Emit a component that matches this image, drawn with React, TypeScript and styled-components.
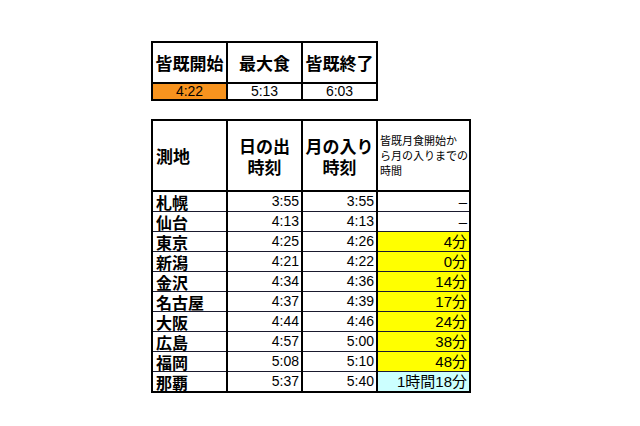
import { FC } from "react";
import styled, { createGlobalStyle } from "styled-components";

const GlobalStyle = createGlobalStyle`
  html, body {
    margin: 0;
    padding: 0;
    background: #ffffff;
  }
  body {
    font-family: "Liberation Sans", "Noto Sans CJK JP", sans-serif;
    color: #000;
  }
`;

const Page = styled.div`
  width: 640px;
  height: 426px;
  box-sizing: border-box;
  padding: 41px 0 0 151px;
  display: flex;
  flex-direction: column;
  align-items: flex-start;
  gap: 18px;
`;

const Table = styled.table`
  border-collapse: collapse;
  table-layout: fixed;
  border: 2px solid #000;
`;

const HeadCell = styled.th<{ $w: number }>`
  width: ${(p) => p.$w}px;
  height: 69px;
  border: 2px solid #000;
  padding: 0;
  font-family: "Noto Sans CJK JP", sans-serif;
  font-size: 17px;
  font-weight: 700;
  line-height: 21px;
  text-align: center;
  vertical-align: middle;
`;

const SmallHead = styled(HeadCell)`
  padding-left: 2px;
  font-size: 11px;
  font-weight: 400;
  line-height: 15px;
  text-align: left;
  white-space: nowrap;
  overflow: hidden;
`;

const PlaceHead = styled(HeadCell)`
  padding-left: 3px;
  text-align: left;
`;

const TopHead = styled.th<{ $w: number }>`
  width: ${(p) => p.$w}px;
  height: 39px;
  border: 2px solid #000;
  padding: 0;
  font-family: "Noto Sans CJK JP", sans-serif;
  font-size: 17px;
  font-weight: 700;
  text-align: center;
  vertical-align: middle;
`;

const ValueCell = styled.td<{ $bg?: string }>`
  height: 15px;
  padding: 0;
  border-left: 2px solid #000;
  border-right: 2px solid #000;
  background: ${(p) => p.$bg || "#fff"};
  font-size: 14px;
  line-height: 15px;
  text-align: center;
`;

const Row = styled.tr`
  & + & td {
    border-top: 1px solid #1a1a2e;
  }
`;

const Place = styled.td`
  height: 19px;
  padding: 0 0 0 3px;
  border-left: 2px solid #000;
  border-right: 2px solid #000;
  font-family: "Noto Sans CJK JP", sans-serif;
  font-size: 16px;
  font-weight: 700;
  line-height: 16px;
  text-align: left;
  vertical-align: middle;
  white-space: nowrap;
`;

const Time = styled.td<{ $bg?: string }>`
  height: 19px;
  padding: 0 2px 0 0;
  border-left: 2px solid #000;
  border-right: 2px solid #000;
  background: ${(p) => p.$bg || "#fff"};
  font-family: "Liberation Sans", "Noto Sans CJK JP", sans-serif;
  font-size: 14px;
  line-height: 19px;
  text-align: right;
  white-space: nowrap;
`;

const Span = styled(Time)`
  font-size: 15px;
`;

type Entry = {
  place: string;
  rise: string;
  set: string;
  span: string;
  bg?: string;
};

const YELLOW = "#ffff00";
const CYAN = "#ccffff";

const entries: Entry[] = [
  { place: "札幌", rise: "3:55", set: "3:55", span: "–" },
  { place: "仙台", rise: "4:13", set: "4:13", span: "–" },
  { place: "東京", rise: "4:25", set: "4:26", span: "4分", bg: YELLOW },
  { place: "新潟", rise: "4:21", set: "4:22", span: "0分", bg: YELLOW },
  { place: "金沢", rise: "4:34", set: "4:36", span: "14分", bg: YELLOW },
  { place: "名古屋", rise: "4:37", set: "4:39", span: "17分", bg: YELLOW },
  { place: "大阪", rise: "4:44", set: "4:46", span: "24分", bg: YELLOW },
  { place: "広島", rise: "4:57", set: "5:00", span: "38分", bg: YELLOW },
  { place: "福岡", rise: "5:08", set: "5:10", span: "48分", bg: YELLOW },
  { place: "那覇", rise: "5:37", set: "5:40", span: "1時間18分", bg: CYAN },
];

const EclipseTimes: FC = () => (
  <Table>
    <thead>
      <tr>
        <TopHead $w={73}>皆既開始</TopHead>
        <TopHead $w={73}>最大食</TopHead>
        <TopHead $w={73}>皆既終了</TopHead>
      </tr>
    </thead>
    <tbody>
      <tr>
        <ValueCell $bg="#f7931e">4:22</ValueCell>
        <ValueCell>5:13</ValueCell>
        <ValueCell>6:03</ValueCell>
      </tr>
    </tbody>
  </Table>
);

const CityTable: FC = () => (
  <Table>
    <thead>
      <tr>
        <PlaceHead $w={70}>測地</PlaceHead>
        <HeadCell $w={73}>
          日の出
          <br />
          時刻
        </HeadCell>
        <HeadCell $w={73}>
          月の入り
          <br />
          時刻
        </HeadCell>
        <SmallHead $w={89}>
          皆既月食開始か
          <br />
          ら月の入りまでの
          <br />
          時間
        </SmallHead>
      </tr>
    </thead>
    <tbody>
      {entries.map((e) => (
        <Row key={e.place}>
          <Place>{e.place}</Place>
          <Time>{e.rise}</Time>
          <Time>{e.set}</Time>
          <Span $bg={e.bg}>{e.span}</Span>
        </Row>
      ))}
    </tbody>
  </Table>
);

const App: FC = () => (
  <>
    <GlobalStyle />
    <Page>
      <EclipseTimes />
      <CityTable />
    </Page>
  </>
);

export default App;
